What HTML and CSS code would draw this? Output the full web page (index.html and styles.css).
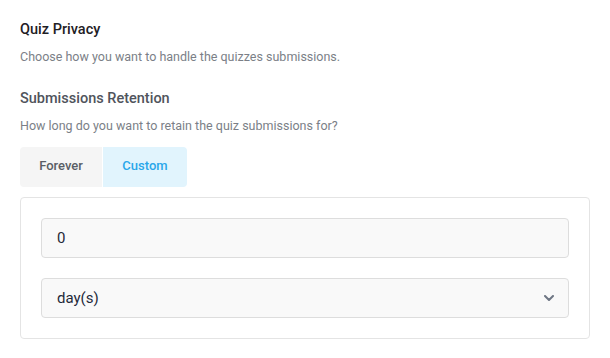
FILE: index.html
```html
<!DOCTYPE html>
<html lang="en">
<head>
<meta charset="utf-8">
<title>Quiz Privacy</title>
<link rel="stylesheet" href="styles.css">
</head>
<body>
<div class="page">
  <h2 class="title">Quiz Privacy</h2>
  <p class="desc">Choose how you want to handle the quizzes submissions.</p>
  <h3 class="subtitle">Submissions Retention</h3>
  <p class="desc desc-sub">How long do you want to retain the quiz submissions for?</p>
  <div class="tabs">
    <button class="tab">Forever</button>
    <button class="tab tab-active">Custom</button>
  </div>
  <div class="card">
    <div class="field">0</div>
    <div class="field field-select">
      <span>day(s)</span>
      <svg class="chevron" width="10" height="6" viewBox="0 0 10 6"><path d="M1 1l4 4 4-4" fill="none" stroke="#6e7684" stroke-width="2" stroke-linecap="round" stroke-linejoin="round"/></svg>
    </div>
  </div>
</div>
</body>
</html>
```
FILE: styles.css
```css
* { box-sizing: border-box; }
html, body { margin: 0; padding: 0; background: #ffffff; }
body { font-family: Roboto, "Liberation Sans", sans-serif; }
.page { padding: 20px 20px 0 20px; width: 610px; }
.title {
  margin: 0;
  font-size: 14.5px;
  line-height: 20px;
  font-weight: 500;
  color: #1e2024;
}
.desc {
  margin: 7px 0 0 0;
  font-size: 12.5px;
  line-height: 20px;
  color: #7b7f87;
}
.subtitle {
  margin: 22px 0 0 0;
  font-size: 14.5px;
  line-height: 20px;
  font-weight: 500;
  color: #50545c;
}
.desc-sub { margin-top: 7px; }
.tabs {
  margin-top: 11px;
  display: flex;
  width: 167px;
  height: 40px;
  border-radius: 4px;
  overflow: hidden;
}
.tab {
  border: 0;
  font-family: inherit;
  font-size: 13px;
  font-weight: 500;
  line-height: 16px;
  padding: 0 0 3px 0;
  height: 40px;
  color: #5a5e66;
  background: #f5f5f5;
}
.tab:first-child { width: 82px; margin-right: 1px; }
.tab-active { width: 84px; background: #e1f4fd; color: #2aa7ea; }
.card {
  margin-top: 10px;
  width: 570px;
  border: 1px solid #e4e4e4;
  border-radius: 4px;
  padding: 20px;
  display: flex;
  flex-direction: column;
  gap: 20px;
}
.field {
  height: 40px;
  border: 1px solid #dddddd;
  border-radius: 4px;
  background: #f9f9f9;
  padding: 0 14px 0 15px;
  display: flex;
  align-items: center;
  font-size: 15px;
  color: #1f2a3a;
}
.field-select { justify-content: space-between; }
```
